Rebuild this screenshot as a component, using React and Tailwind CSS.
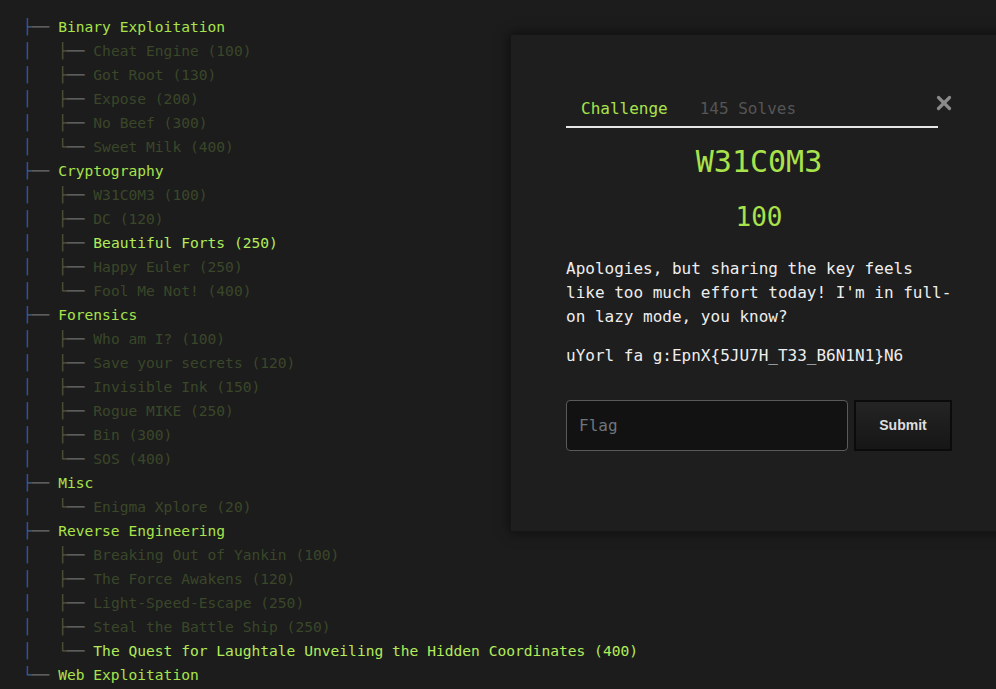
import { X } from 'lucide-react'

const tree = [
  { name: 'Binary Exploitation', children: [
    { name: 'Cheat Engine (100)' },
    { name: 'Got Root (130)' },
    { name: 'Expose (200)' },
    { name: 'No Beef (300)' },
    { name: 'Sweet Milk (400)' },
  ] },
  { name: 'Cryptography', children: [
    { name: 'W31C0M3 (100)' },
    { name: 'DC (120)' },
    { name: 'Beautiful Forts (250)', active: true },
    { name: 'Happy Euler (250)' },
    { name: 'Fool Me Not! (400)' },
  ] },
  { name: 'Forensics', children: [
    { name: 'Who am I? (100)' },
    { name: 'Save your secrets (120)' },
    { name: 'Invisible Ink (150)' },
    { name: 'Rogue MIKE (250)' },
    { name: 'Bin (300)' },
    { name: 'SOS (400)' },
  ] },
  { name: 'Misc', children: [
    { name: 'Enigma Xplore (20)' },
  ] },
  { name: 'Reverse Engineering', children: [
    { name: 'Breaking Out of Yankin (100)' },
    { name: 'The Force Awakens (120)' },
    { name: 'Light-Speed-Escape (250)' },
    { name: 'Steal the Battle Ship (250)' },
    { name: 'The Quest for Laughtale Unveiling the Hidden Coordinates (400)', active: true },
  ] },
  { name: 'Web Exploitation', children: [] },
]

const mono = { fontFamily: '"DejaVu Sans Mono", "Liberation Mono", monospace' }

const Row = ({ children }) => (
  <div className="h-[24px] leading-[24px] whitespace-pre">{children}</div>
)

const ChallengeTree = () => (
  <div className="pl-[23px] pt-[15px] text-[14.6px]" style={mono}>
    {tree.map((cat, ci) => {
      const lastCat = ci === tree.length - 1
      return (
        <div key={cat.name}>
          <Row>
            <span className="text-[#3e6286]">{lastCat ? '└' : '├'}</span>
            <span className="text-[#6b6b6b]">── </span>
            <span className="text-[#a9e34b]">{cat.name}</span>
          </Row>
          {cat.children.map((ch, i) => (
            <Row key={ch.name}>
              <span className="text-[#3e6286]">│   </span>
              <span className="text-[#5c5238]">{i === cat.children.length - 1 ? '└' : '├'}</span>
              <span className="text-[#6b6b6b]">── </span>
              <span className={ch.active ? 'text-[#b2ec5a]' : 'text-[#3a4729]'}>{ch.name}</span>
            </Row>
          ))}
        </div>
      )
    })}
  </div>
)

const ChallengeModal = () => (
  <div
    className="absolute left-[510px] top-[34px] w-[500px] h-[498px] bg-[#1e1e1e] border border-[#151515] shadow-[0_0_12px_rgba(0,0,0,0.6)] pl-[55px] pt-[56px]"
    style={mono}
  >
    {/* Tabs */}
    <div className="flex items-start">
      <div className="w-[372px] border-b-2 border-[#e6e6e6] flex text-[16px] h-[37px] items-center">
        <span className="pl-[15px] text-[#a9e34b]">Challenge</span>
        <span className="pl-[32px] text-[#555555]">145 Solves</span>
      </div>
      <button className="ml-[-5px] mt-[1px] text-[#8a8a8a]">
        <X size={22} strokeWidth={3.5} />
      </button>
    </div>

    {/* Title */}
    <div className="w-[386px] text-center text-[#a9e34b]">
      <h2 className="text-[30px] leading-[40px] mt-[14px]">W31C0M3</h2>
      <h3 className="text-[26px] leading-[40px] mt-[15px]">100</h3>
    </div>

    {/* Description */}
    <div className="w-[390px] text-[16px] leading-[24px] text-[#eeeeee] mt-[20px]">
      <p>Apologies, but sharing the key feels like too much effort today! I'm in full-on lazy mode, you know?</p>
      <p className="mt-[15px]">uYorl fa g:EpnX{'{'}5JU7H_T33_B6N1N1{'}'}N6</p>
    </div>

    {/* Flag form */}
    <div className="flex gap-[6px] mt-[32px]">
      <div className="w-[282px] h-[51px] rounded-[4px] border border-[#5a5a5a] bg-[#121212] flex items-center pl-[12px] text-[16px] text-[#6c757d]">
        Flag
      </div>
      <button
        className="w-[98px] h-[51px] border-2 border-[#0b0b0b] bg-gradient-to-b from-[#242424] to-[#161616] text-[#dedede] text-[14px] font-bold"
        style={{ fontFamily: '"Liberation Sans", Arial, sans-serif' }}
      >
        Submit
      </button>
    </div>
  </div>
)

export default function App() {
  return (
    <div className="relative w-[996px] h-[689px] overflow-hidden bg-[#1c1c1c]">
      <ChallengeTree />
      <ChallengeModal />
    </div>
  )
}
